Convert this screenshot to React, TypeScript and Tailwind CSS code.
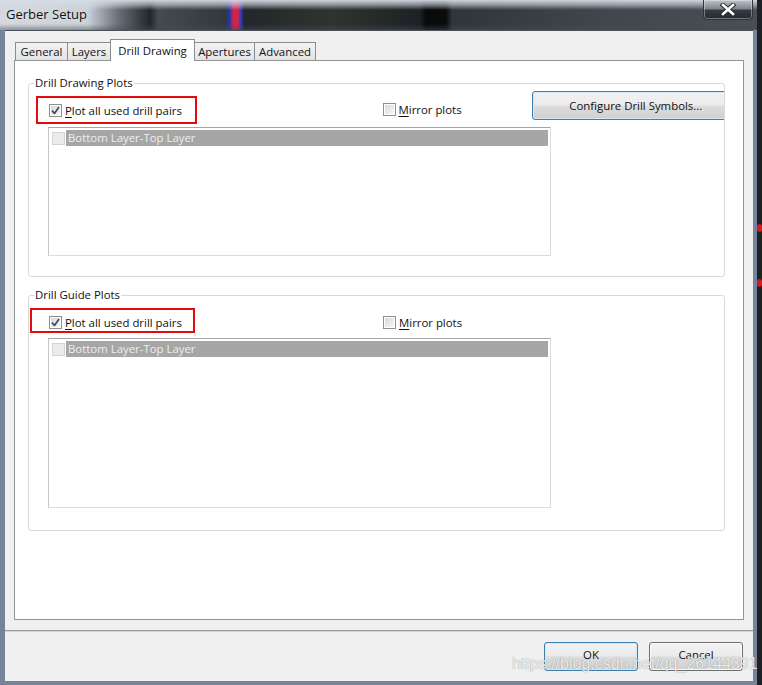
import React from 'react';

const Check: React.FC = () => (
  <svg width="9" height="9" viewBox="0 0 9 9" fill="none">
    <path d="M1 4.6 L3.5 7.4 L8 1" stroke="#3d4d6b" strokeWidth="1.7" strokeLinejoin="round" />
  </svg>
);

const Checkbox: React.FC<{ checked?: boolean; disabled?: boolean }> = ({ checked, disabled }) => (
  <span
    className={`flex h-[13px] w-[13px] shrink-0 items-center justify-center border ${
      disabled ? 'border-[#d4d4d4] bg-[#ececec]' : 'border-[#8f8f8f] bg-white p-px'
    }`}
  >
    {!disabled && (
      <span className="flex h-full w-full items-center justify-center bg-[linear-gradient(135deg,#d9d9d9,#f7f7f7)]">
        {checked && <Check />}
      </span>
    )}
  </span>
);

const CheckLabel: React.FC<{ checked?: boolean; mnemonic: string; rest: string; className?: string }> = ({
  checked,
  mnemonic,
  rest,
  className,
}) => (
  <div className={`flex h-[13px] items-center gap-[3px] ${className ?? ''}`}>
    <Checkbox checked={checked} />
    <span className="whitespace-nowrap leading-[13px]">
      <span className="underline underline-offset-2">{mnemonic}</span>
      {rest}
    </span>
  </div>
);

const WinButton: React.FC<{ primary?: boolean; className?: string; children: React.ReactNode }> = ({
  primary,
  className,
  children,
}) => (
  <div
    className={`flex items-center justify-center rounded-[3px] border bg-[linear-gradient(to_bottom,#f2f2f2_0%,#ebebeb_48%,#dddddd_52%,#cfcfcf_100%)] ${
      primary
        ? 'border-[#3c7fb1] shadow-[inset_0_0_0_1px_#d3e8f6]'
        : 'border-[#707070] shadow-[inset_0_0_0_1px_#fbfbfb]'
    } ${className ?? ''}`}
  >
    {children}
  </div>
);

const ListBox: React.FC<{ className?: string }> = ({ className }) => (
  <div
    className={`-ml-px w-[503px] border border-[#dcdcdc] border-t-[#a6a6a6] border-l-[#c6c6c6] bg-white px-px pt-[2px] ${className ?? ''}`}
  >
    <div className="flex h-[16px] items-center">
      <span className="ml-[2px]">
        <Checkbox disabled />
      </span>
      <div className="mr-px ml-px flex h-full flex-1 items-center bg-[#a6a6a6] pl-[2px] whitespace-nowrap text-[#eeeeee]">
        Bottom Layer-Top Layer
      </div>
    </div>
  </div>
);

const GroupBox: React.FC<{ title: string; className?: string; children: React.ReactNode }> = ({
  title,
  className,
  children,
}) => (
  <div className={`relative w-[697px] rounded-[3px] border border-[#d5dadd] pl-[20px] ${className ?? ''}`}>
    <span className="absolute top-[-9px] left-[5px] bg-white px-px leading-[16px] whitespace-nowrap">{title}</span>
    {children}
  </div>
);

const tabs = [
  { name: 'General', w: 'w-[53px]' },
  { name: 'Layers', w: 'w-[44px]' },
  { name: 'Drill Drawing', w: 'w-[85px]', active: true },
  { name: 'Apertures', w: 'w-[61px]' },
  { name: 'Advanced', w: 'w-[62px]' },
];

export default function App() {
  return (
    <div className="relative h-[685px] w-[762px] overflow-hidden bg-[#1d2025] font-['Open_Sans',sans-serif] text-[11.4px] text-[#111]">
      {/* desktop behind the window */}
      <div className="absolute top-[224px] right-0 h-[8px] w-[5px] rounded-full bg-[#c81e2a]" />
      <div className="absolute top-[279px] right-0 h-[8px] w-[5px] rounded-full bg-[#c81e2a]" />

      <div className="flex h-full w-[757px] flex-col bg-[#76849b]">
        {/* title bar */}
        <div className="relative flex h-[30px] shrink-0 items-center bg-[image:linear-gradient(to_bottom,rgba(214,220,228,0.95)_0px,rgba(214,220,228,0.55)_5px,rgba(214,220,228,0)_10px,rgba(0,0,0,0)_24px,rgba(70,76,84,0.5)_30px),linear-gradient(to_right,#d3d8de_0px,#c9cfd6_88px,#6a7077_118px,#22262a_150px,#454a50_158px,#33383d_226px,#2636b5_230px,#d0234a_233px,#d0234a_238px,#2b3bbd_241px,#22262b_244px,#2f342f_330px,#1d2125_420px,#08090a_426px,#0b0c0d_446px,#30353a_452px,#41464c_600px,#4a4f56_757px)] pl-[6px]">
          <span className="pb-[1px] text-[13px] text-[#111] [text-shadow:0_0_6px_rgba(255,255,255,0.8)]">Gerber Setup</span>
          <div className="absolute top-[-1px] right-[4px] flex h-[21px] w-[50px] items-center justify-center rounded-b-[4px] border border-[#2f3339] bg-[linear-gradient(to_bottom,#bfc5cc_0%,#7f868e_45%,#343a40_55%,#262a2f_100%)] shadow-[inset_0_0_0_1px_rgba(255,255,255,0.35)]">
            <svg width="16" height="13" viewBox="0 0 16 13">
              <path d="M3 2 L13 11 M13 2 L3 11" stroke="#2a2d31" strokeWidth="4.6" strokeLinecap="square" />
              <path d="M3 2 L13 11 M13 2 L3 11" stroke="#ffffff" strokeWidth="2.6" strokeLinecap="square" />
            </svg>
          </div>
        </div>

        {/* client area */}
        <div className="ml-[5px] mr-[4px] flex flex-1 flex-col border-t border-[#4b5159] bg-[#f0f0f0]">
          <div className="mt-[8px] ml-[10px] flex items-end">
            {tabs.map((t, i) =>
              t.active ? (
                <div
                  key={t.name}
                  className={`relative z-10 -mb-px flex h-[22px] items-center justify-center border border-b-0 border-[#898c95] bg-white whitespace-nowrap ${t.w} ${i > 0 ? '-ml-px' : ''}`}
                >
                  {t.name}
                </div>
              ) : (
                <div
                  key={t.name}
                  className={`flex h-[18px] items-center justify-center border border-b-0 border-[#898c95] bg-[linear-gradient(to_bottom,#f3f3f3,#e3e3e3)] whitespace-nowrap ${t.w} ${i > 0 ? '-ml-px' : ''}`}
                >
                  {t.name}
                </div>
              ),
            )}
          </div>

          <div className="ml-[9px] h-[560px] w-[730px] border border-[#959595] bg-white pt-[22px] pl-[13px]">
            <GroupBox title="Drill Drawing Plots" className="pb-[20px]">
              <div className="absolute top-[12px] left-[7px] h-[28px] w-[161px] border-2 border-[#e30b0b]" />
              <div className="flex h-[35px] items-start">
                <div className="w-[334px]">
                  <CheckLabel checked mnemonic="P" rest="lot all used drill pairs" className="mt-[20px]" />
                </div>
                <div className="w-[150px]">
                  <CheckLabel mnemonic="M" rest="irror plots" className="mt-[19px]" />
                </div>
                <div className="mt-[7px] w-[192px] overflow-hidden">
                  <WinButton primary className="h-[29px] w-[207px]">
                    Configure Drill Symbols...
                  </WinButton>
                </div>
              </div>
              <ListBox className="mt-[8px] h-[129px]" />
            </GroupBox>

            <GroupBox title="Drill Guide Plots" className="mt-[18px] pb-[22px]">
              <div className="absolute top-[12px] left-[1px] h-[25px] w-[165px] border-2 border-[#e30b0b]" />
              <div className="flex h-[34px] items-start">
                <div className="w-[334px]">
                  <CheckLabel checked mnemonic="P" rest="lot all used drill pairs" className="mt-[20px]" />
                </div>
                <div className="w-[150px]">
                  <CheckLabel mnemonic="M" rest="irror plots" className="mt-[20px]" />
                </div>
              </div>
              <ListBox className="mt-[8px] h-[170px]" />
            </GroupBox>
          </div>

          <div className="mt-[10px] h-[2px] border-t border-b border-t-[#9a9a9a] border-b-[#d6d6d6]" />

          <div className="flex justify-end gap-[11px] pt-[10px] pr-[10px]">
            <WinButton primary className="h-[29px] w-[94px]">
              <span className="mt-[-3px]">OK</span>
            </WinButton>
            <WinButton className="h-[29px] w-[94px]">
              <span className="mt-[-3px]">Cancel</span>
            </WinButton>
          </div>
        </div>
        <div className="h-[4px] shrink-0" />
      </div>

      <div className="pointer-events-none absolute top-[655px] left-[512px] font-['Liberation_Sans',sans-serif] text-[16px] leading-[18px] whitespace-nowrap text-[rgba(255,255,255,0.85)] [text-shadow:0_0_1px_rgba(80,80,80,0.7)]">
        https://blog.csdn.net/qq_26144391
      </div>
    </div>
  );
}
